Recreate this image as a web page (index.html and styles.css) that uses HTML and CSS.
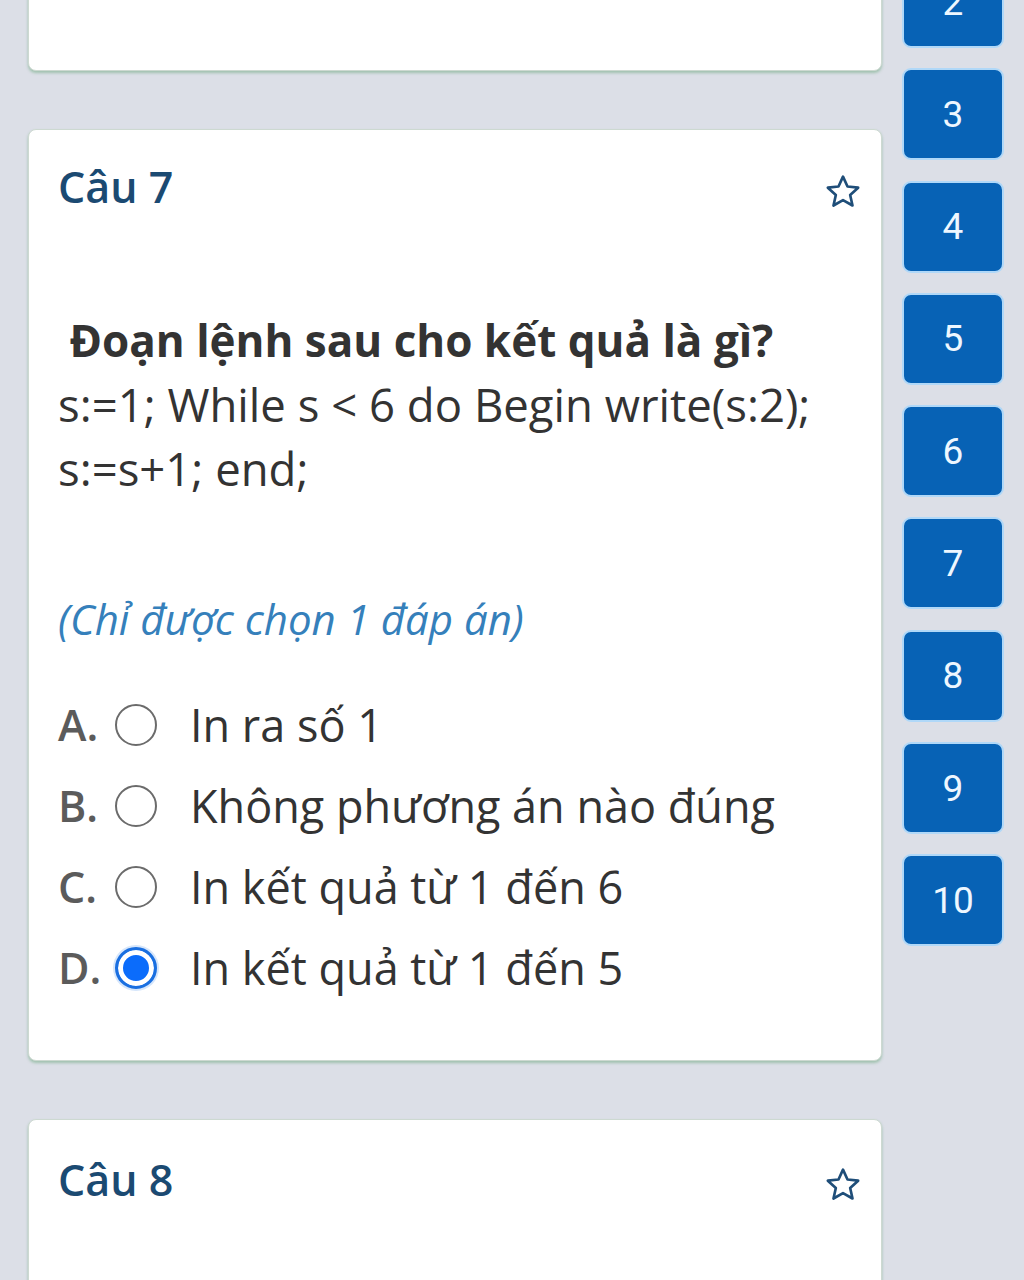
FILE: index.html
```html
<!DOCTYPE html>
<html lang="vi">
<head>
    <meta charset="UTF-8">
    <meta name="viewport" content="width=device-width, initial-scale=1.0">
    <title>Bài kiểm tra</title>
    <link rel="stylesheet" href="styles.css">
</head>
<body>
    <div class="page">
        <div class="questions">
            <div class="card card-prev">
                <div class="option">
                    <span class="label">D.</span>
                    <span class="radio"></span>
                    <span class="option-text">In ra các số 1, 2, 3</span>
                </div>
            </div>

            <div class="card">
                <div class="card-head">
                    <h2 class="title">Câu 7</h2>
                    <svg class="star" viewBox="0 0 24 24"><path d="M12 2.8l2.7 5.9 6.4.7-4.8 4.4 1.4 6.3L12 16.9l-5.7 3.2 1.4-6.3-4.8-4.4 6.4-.7z"/></svg>
                </div>
                <div class="question">
                    <p class="q-bold">&nbsp;Đoạn lệnh sau cho kết quả là gì?</p>
                    <p>s:=1; While s &lt; 6 do Begin write(s:2);</p>
                    <p>s:=s+1; end;</p>
                </div>
                <p class="hint">(Chỉ được chọn 1 đáp án)</p>
                <div class="options">
                    <div class="option">
                        <span class="label">A.</span>
                        <span class="radio"></span>
                        <span class="option-text">In ra số 1</span>
                    </div>
                    <div class="option">
                        <span class="label">B.</span>
                        <span class="radio"></span>
                        <span class="option-text">Không phương án nào đúng</span>
                    </div>
                    <div class="option">
                        <span class="label">C.</span>
                        <span class="radio"></span>
                        <span class="option-text">In kết quả từ 1 đến 6</span>
                    </div>
                    <div class="option">
                        <span class="label">D.</span>
                        <span class="radio checked"></span>
                        <span class="option-text">In kết quả từ 1 đến 5</span>
                    </div>
                </div>
            </div>

            <div class="card card-next">
                <div class="card-head">
                    <h2 class="title">Câu 8</h2>
                    <svg class="star" viewBox="0 0 24 24"><path d="M12 2.8l2.7 5.9 6.4.7-4.8 4.4 1.4 6.3L12 16.9l-5.7 3.2 1.4-6.3-4.8-4.4 6.4-.7z"/></svg>
                </div>
            </div>
        </div>

        <div class="nav">
            <button class="nav-btn">2</button>
            <button class="nav-btn">3</button>
            <button class="nav-btn">4</button>
            <button class="nav-btn">5</button>
            <button class="nav-btn">6</button>
            <button class="nav-btn">7</button>
            <button class="nav-btn">8</button>
            <button class="nav-btn">9</button>
            <button class="nav-btn">10</button>
        </div>
    </div>
</body>
</html>
```

FILE: styles.css
```css
html, body {
    margin: 0;
    height: 1280px;
    overflow: hidden;
}

body {
    background-color: #dcdfe7;
    font-family: "Open Sans", "Noto Sans", sans-serif;
    color: #333;
}

.page {
    display: flex;
    gap: 20px;
    padding: 0 20px 0 28px;
}

.questions {
    width: 854px;
    display: flex;
    flex-direction: column;
    gap: 58px;
}

.card {
    background: #fff;
    border: 1px solid #cdd9d1;
    border-radius: 8px;
    box-shadow: 0 2px 3px rgba(70, 150, 90, 0.4);
    padding: 27px 21px 52px 29px;
}

.card-prev {
    margin-top: -140px;
    height: 211px;
    box-sizing: border-box;
    padding-top: 72px;
}

.card-next {
    height: 300px;
    padding-top: 30px;
}

.card-head {
    display: flex;
    justify-content: space-between;
    align-items: center;
}

.title {
    margin: 0;
    font-size: 43px;
    line-height: 60px;
    font-weight: 600;
    color: #1b4a72;
}

.star {
    width: 40px;
    height: 40px;
    margin-top: 10px;
    margin-right: -3px;
    fill: none;
    stroke: #1f4e79;
    stroke-width: 1.6;
    stroke-linejoin: round;
}

.question {
    margin-top: 91px;
}

.question p {
    margin: 0;
    font-size: 45.5px;
    line-height: 64px;
}

.question .q-bold {
    font-size: 44px;
    font-weight: 700;
}

.hint {
    margin: 91px 0 0;
    font-size: 42px;
    line-height: 56px;
    font-style: italic;
    color: #3580bb;
}

.options {
    margin-top: 37px;
}

.option {
    display: flex;
    align-items: center;
    height: 81px;
}

.label {
    width: 42px;
    font-size: 43px;
    font-weight: 600;
    color: #5b5b5b;
}

.radio {
    width: 42px;
    height: 42px;
    margin-left: 15px;
    border: 2px solid #6b6b6b;
    border-radius: 50%;
    box-sizing: border-box;
    flex-shrink: 0;
}

.radio.checked {
    border: 3px solid #1a6fe0;
    background: #0b6cfb;
    box-shadow: inset 0 0 0 5px #fff, 0 0 0 2px #d6e6fb;
}

.option-text {
    margin-left: 33px;
    font-size: 45px;
    color: #333;
}

.nav {
    width: 102px;
    display: flex;
    flex-direction: column;
    gap: 20.3px;
    margin-top: -44px;
}

.nav-btn {
    height: 92px;
    border: 2px solid #b0d8f8;
    border-radius: 9px;
    background: #0762b5;
    color: #eef7ff;
    font-family: Roboto, "Noto Sans", sans-serif;
    font-size: 37px;
    padding: 0;
}
```
